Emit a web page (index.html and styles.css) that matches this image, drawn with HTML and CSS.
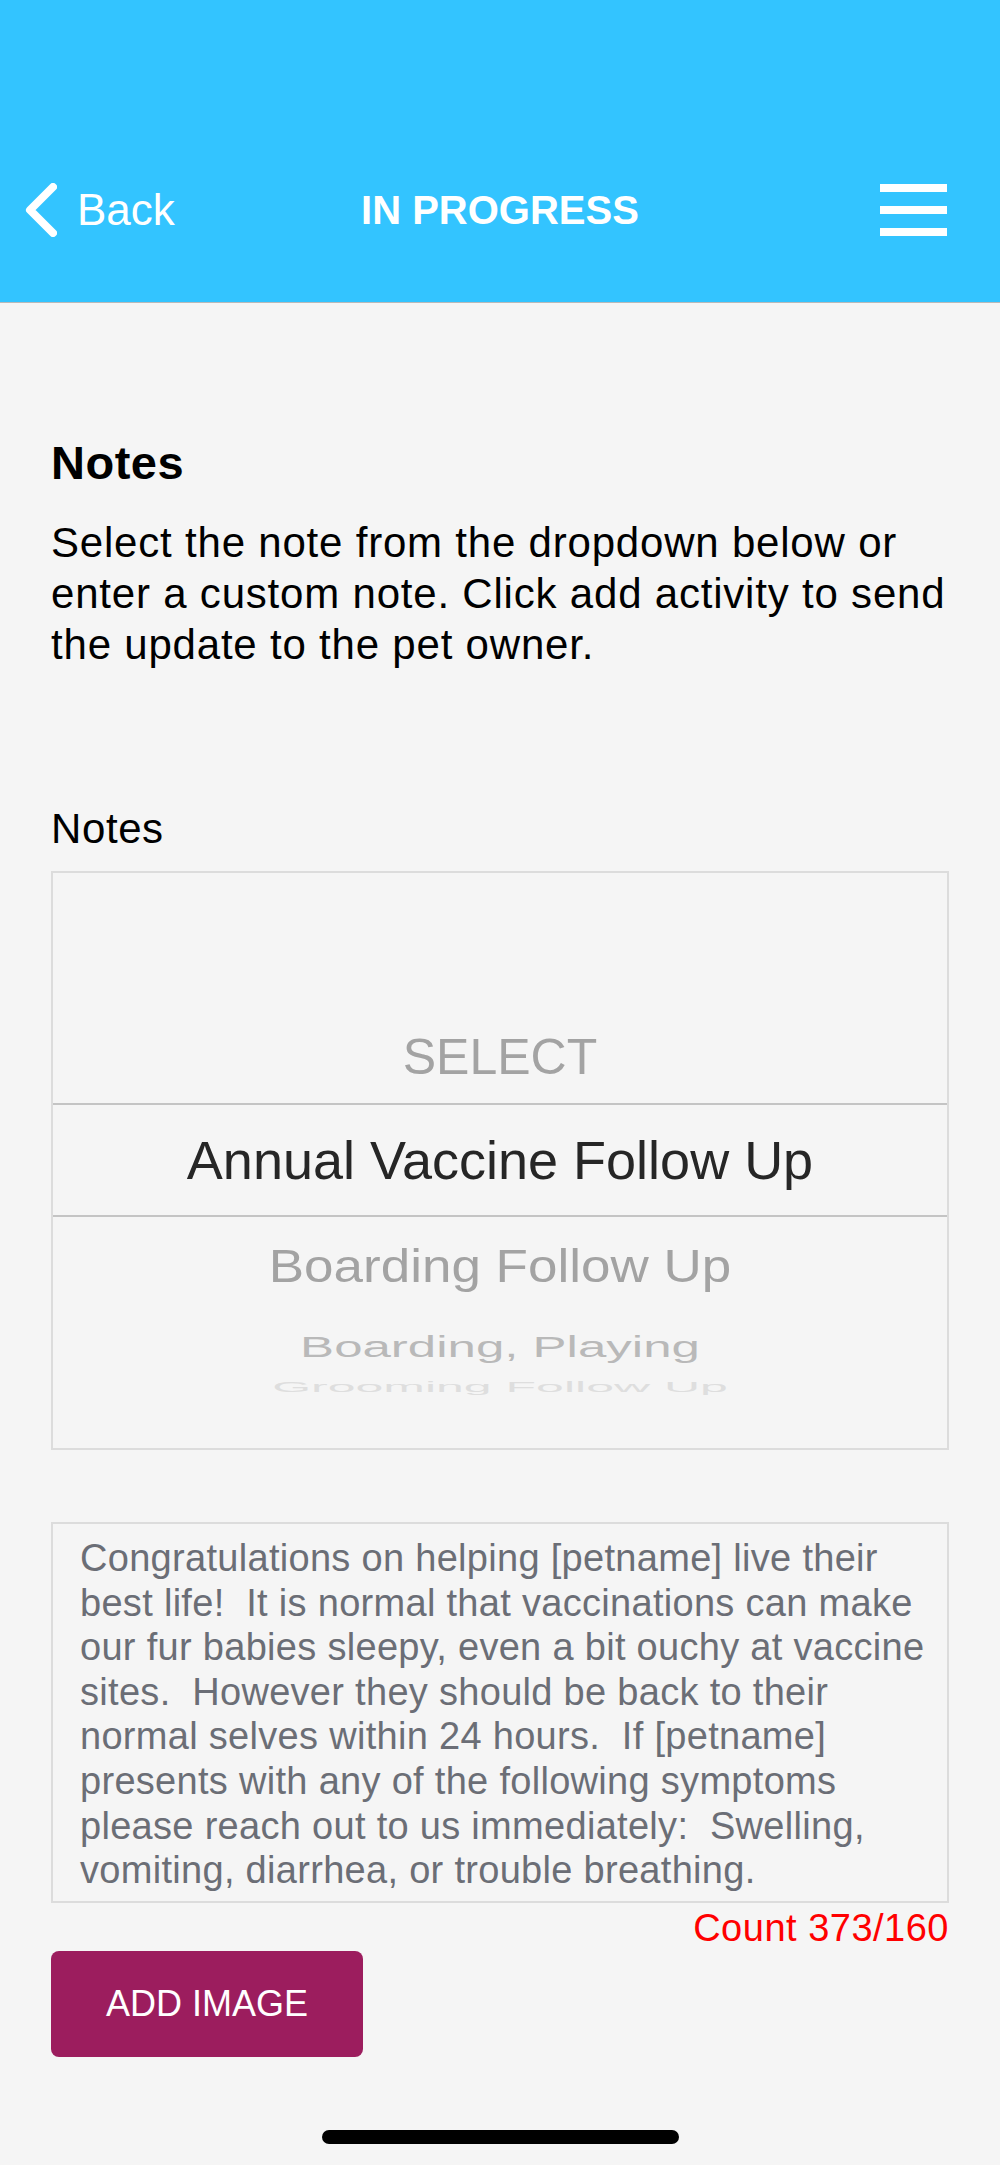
FILE: index.html
```html
<!DOCTYPE html>
<html lang="en">
<head>
    <meta charset="UTF-8">
    <meta name="viewport" content="width=device-width, initial-scale=1.0">
    <title>In Progress</title>
    <link rel="stylesheet" href="styles.css">
</head>
<body>
    <header class="topbar">
        <div class="nav">
            <a class="back" href="#">
                <svg class="chevron" width="32" height="54" viewBox="0 0 32 54">
                    <path d="M28 4 L5 27 L28 50" fill="none" stroke="#fff" stroke-width="8" stroke-linecap="round" stroke-linejoin="round"/>
                </svg>
                <span>Back</span>
            </a>
            <div class="title">IN PROGRESS</div>
            <div class="menu">
                <span></span>
                <span></span>
                <span></span>
            </div>
        </div>
    </header>

    <main class="content">
        <h2>Notes</h2>
        <p class="intro">Select the note from the dropdown below or enter a custom note. Click add activity to send the update to the pet owner.</p>

        <div class="label">Notes</div>
        <div class="picker">
            <div class="row spacer"></div>
            <div class="row placeholder">SELECT</div>
            <div class="row selected">Annual Vaccine Follow Up</div>
            <div class="row next1">Boarding Follow Up</div>
            <div class="row next2">Boarding, Playing</div>
            <div class="row next3">Grooming Follow Up</div>
        </div>

        <div class="note-text">Congratulations on helping [petname] live their best life!  It is normal that vaccinations can make our fur babies sleepy, even a bit ouchy at vaccine sites.  However they should be back to their normal selves within 24 hours.  If [petname] presents with any of the following symptoms please reach out to us immediately:  Swelling, vomiting, diarrhea, or trouble breathing.</div>
        <div class="count">Count 373/160</div>

        <button class="add-image">ADD IMAGE</button>
    </main>

    <div class="home-bar"></div>
</body>
</html>
```

FILE: styles.css
```css
body {
    margin: 0;
    font-family: 'Liberation Sans', Arial, sans-serif;
    background-color: #f5f5f5;
    color: #000;
}
.topbar {
    background-color: #33c4ff;
    border-bottom: 1px solid #b9b9b9;
    padding-top: 166px;
    box-sizing: border-box;
    height: 303px;
}
.nav {
    display: grid;
    grid-template-columns: 1fr auto 1fr;
    align-items: center;
    height: 88px;
    color: #fff;
}
.back {
    display: flex;
    align-items: center;
    gap: 20px;
    padding-left: 25px;
    color: #fff;
    text-decoration: none;
    font-size: 44px;
}
.chevron {
    display: block;
}
.title {
    font-size: 40px;
    font-weight: bold;
}
.menu {
    justify-self: end;
    margin-right: 53px;
    display: flex;
    flex-direction: column;
    gap: 14px;
}
.menu span {
    display: block;
    width: 67px;
    height: 8px;
    background-color: #fff;
}
.content {
    padding: 0 51px;
}
h2 {
    margin: 132px 0 0;
    font-size: 47px;
    line-height: 55px;
    font-weight: bold;
    letter-spacing: 0.5px;
}
.intro {
    margin: 27px 0 0;
    font-size: 42px;
    line-height: 51px;
    letter-spacing: 0.8px;
}
.label {
    margin-top: 133px;
    font-size: 42px;
    line-height: 51px;
    letter-spacing: 0.6px;
}
.picker {
    margin-top: 17px;
    height: 579px;
    box-sizing: border-box;
    border: 2px solid #dcdcdc;
    display: flex;
    flex-direction: column;
    overflow: hidden;
    text-align: center;
}
.row {
    display: flex;
    align-items: center;
    justify-content: center;
    white-space: nowrap;
}
.spacer {
    height: 137px;
}
.placeholder {
    height: 93px;
    font-size: 50px;
    color: #a3a3a3;
}
.selected {
    height: 114px;
    box-sizing: border-box;
    border-top: 2px solid #c4c4c4;
    border-bottom: 2px solid #c4c4c4;
    font-size: 54px;
    color: #262626;
}
.next1 {
    height: 96px;
    font-size: 53px;
    color: #a3a3a3;
    transform: scaleY(0.88);
}
.next2 {
    height: 68px;
    font-size: 51px;
    color: #b9b9b9;
    transform: scaleY(0.58);
}
.next3 {
    height: 12px;
    font-size: 50px;
    color: #dedede;
    transform: scaleY(0.28);
}
.note-text {
    margin-top: 72px;
    height: 381px;
    box-sizing: border-box;
    border: 2px solid #dcdcdc;
    padding: 12px 20px 0 27px;
    font-size: 38px;
    line-height: 44.6px;
    letter-spacing: 0.3px;
    color: #6b6e76;
    white-space: pre-wrap;
    overflow: hidden;
}
.count {
    margin-top: 3px;
    text-align: right;
    font-size: 38px;
    line-height: 44px;
    letter-spacing: 0.5px;
    color: #ff0000;
}
.add-image {
    display: block;
    margin-top: 1px;
    width: 312px;
    height: 106px;
    border: none;
    border-radius: 8px;
    background-color: #9c1d5e;
    color: #fff;
    font-family: 'Liberation Sans', Arial, sans-serif;
    font-size: 36px;
    cursor: pointer;
}
.home-bar {
    width: 357px;
    height: 14px;
    margin: 73px auto 0;
    border-radius: 7px;
    background-color: #000;
}
```
